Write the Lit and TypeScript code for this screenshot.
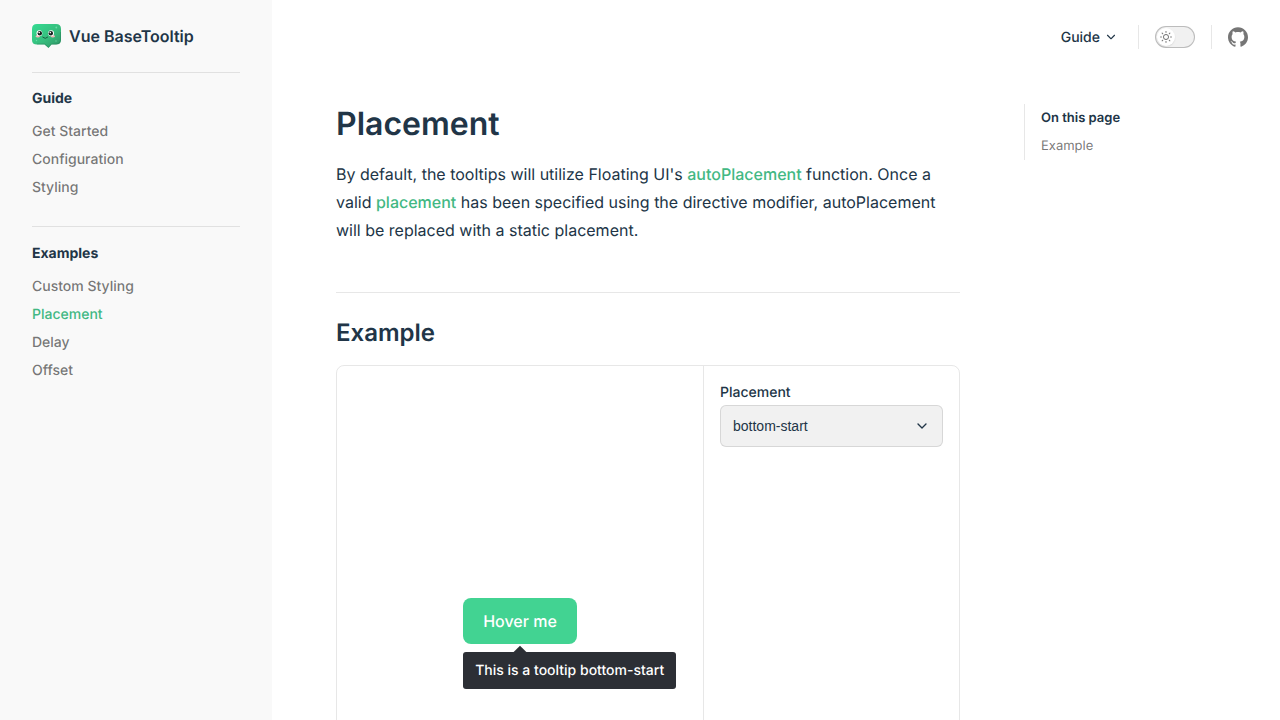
import { LitElement, html, css } from "lit";
import { customElement, state } from "lit/decorators.js";
import { classMap } from "lit/directives/class-map.js";

const placements = [
  "top-start", "top", "top-end",
  "right-start", "right", "right-end",
  "bottom-start", "bottom", "bottom-end",
  "left-start", "left", "left-end",
];

const sections = [
  { title: "Guide", links: ["Get Started", "Configuration", "Styling"] },
  { title: "Examples", links: ["Custom Styling", "Placement", "Delay", "Offset"] },
];

const chevron = html`
  <svg class="chevron" viewBox="0 0 24 24" aria-hidden="true">
    <path fill="currentColor" d="M12,16c-0.3,0-0.5-0.1-0.7-0.3l-6-6c-0.4-0.4-0.4-1,0-1.4s1-0.4,1.4,0l5.3,5.3l5.3-5.3c0.4-0.4,1-0.4,1.4,0s0.4,1,0,1.4l-6,6C12.5,15.9,12.3,16,12,16z"/>
  </svg>`;

@customElement("site-sidebar")
class SiteSidebar extends LitElement {
  static styles = css`
    :host {
      display: block;
      box-sizing: border-box;
      position: sticky;
      top: 0;
      height: 100vh;
      padding: 0 32px;
      background: #f9f9f9;
      overflow: hidden;
    }
    a { text-decoration: none; }
    .brand {
      display: flex;
      align-items: center;
      gap: 8px;
      height: 72px;
      font-size: 16px;
      font-weight: 600;
      color: #213547;
    }
    .logo { width: 29px; height: 24px; }
    .group {
      border-top: 1px solid rgba(60, 60, 60, 0.12);
      padding: 11px 0 24px;
    }
    .group:first-child { padding-top: 10px; }
    .title {
      margin: 0 0 3px;
      padding: 6px 0;
      font-size: 14px;
      line-height: 20px;
      font-weight: 700;
      color: #213547;
    }
    .list {
      list-style: none;
      margin: 0;
      padding: 0;
    }
    .link {
      display: block;
      padding: 4px 0;
      font-size: 14px;
      line-height: 20px;
      font-weight: 500;
      color: rgba(60, 60, 60, 0.7);
    }
    .link.active { color: #42b883; }
  `;

  render() {
    return html`
      <a class="brand" href="#">
        <svg class="logo" viewBox="0 0 29 24" aria-hidden="true">
          <defs>
            <linearGradient id="body" x1="0" y1="0" x2="1" y2="1">
              <stop offset="0" stop-color="#35dc93"/>
              <stop offset="0.55" stop-color="#37bd7d"/>
              <stop offset="1" stop-color="#2f9264"/>
            </linearGradient>
          </defs>
          <path fill="url(#body)" d="M5 0h19q5 0 5 5v11q0 4.500-5 4.500h-4.500L16.500 24 12.500 20.500H5q-5 0-5-4.500V5q0-5 5-5z"/>
          <path fill="none" stroke="#257b54" stroke-opacity=".4" d="M28.500 8v8q-.3 4-4.300 4h-4.700l-3 3.200-4-3.200H5"/>
          <g fill="#8af0c0" opacity=".6"><circle cx="24.300" cy="3.500" r=".9"/><circle cx="4.500" cy="16.500" r=".7"/><circle cx="24" cy="17" r=".7"/></g>
          <ellipse cx="5.800" cy="12.300" rx="2" ry="1.200" fill="#f3b5b8"/>
          <ellipse cx="20.800" cy="12.300" rx="2" ry="1.200" fill="#f3b5b8"/>
          <circle cx="7.400" cy="9.200" r="2.900" fill="#fff"/>
          <circle cx="19.100" cy="9.200" r="2.900" fill="#fff"/>
          <circle cx="7.800" cy="9.200" r="2.200" fill="#16201c"/>
          <circle cx="18.800" cy="9.200" r="2.200" fill="#16201c"/>
          <circle cx="7.200" cy="8.600" r=".8" fill="#fff"/>
          <circle cx="18.300" cy="8.600" r=".8" fill="#fff"/>
          <path d="M10.700 13.200q2.600 2.600 5 0" fill="none" stroke="#16523a" stroke-width=".9" stroke-linecap="round"/>
        </svg>
        <span>Vue BaseTooltip</span>
      </a>
      <nav aria-label="Sidebar">
        ${sections.map((s) => html`
          <section class="group">
            <h2 class="title">${s.title}</h2>
            <ul class="list">
              ${s.links.map((l) => html`
                <li><a href="#" class=${classMap({ link: true, active: l === "Placement" })}>${l}</a></li>`)}
            </ul>
          </section>`)}
      </nav>`;
  }
}

@customElement("site-nav")
class SiteNav extends LitElement {
  static styles = css`
    :host {
      display: flex;
      justify-content: flex-end;
      align-items: center;
      gap: 16px;
      height: 74px;
      padding: 0 32px;
    }
    .menu {
      display: flex;
      align-items: center;
      gap: 4px;
      padding: 0 4px 0 0;
      border: 0;
      background: none;
      font: 500 14px/25px Inter, sans-serif;
      text-rendering: inherit;
      color: #213547;
    }
    .chevron { width: 14px; height: 14px; }
    .rule {
      width: 1px;
      height: 24px;
      background: rgba(60, 60, 60, 0.12);
    }
    .switch {
      box-sizing: border-box;
      width: 40px;
      height: 22px;
      padding: 1px;
      border: 1px solid rgba(60, 60, 60, 0.29);
      border-radius: 11px;
      background: #f1f1f1;
    }
    .knob {
      display: flex;
      align-items: center;
      justify-content: center;
      width: 18px;
      height: 18px;
      border-radius: 50%;
      background: #fff;
      box-shadow: 0 1px 2px rgba(0, 0, 0, 0.04), 0 1px 2px rgba(0, 0, 0, 0.06);
      color: rgba(60, 60, 60, 0.7);
    }
    .sun { width: 12px; height: 12px; }
    .social {
      display: flex;
      color: rgba(60, 60, 60, 0.7);
    }
    .github { width: 20px; height: 20px; }
  `;

  render() {
    return html`
      <button class="menu" type="button" aria-haspopup="true">Guide ${chevron}</button>
      <span class="rule"></span>
      <button class="switch" type="button" role="switch" aria-checked="false" aria-label="Toggle dark mode">
        <span class="knob">
          <svg class="sun" viewBox="0 0 24 24" fill="currentColor" aria-hidden="true">
            <path d="M12,18c-3.300,0-6-2.700-6-6s2.700-6,6-6s6,2.700,6,6S15.300,18,12,18zM12,8c-2.200,0-4,1.800-4,4c0,2.200,1.800,4,4,4c2.200,0,4-1.800,4-4C16,9.800,14.200,8,12,8z"/>
            <path d="M12,4c-0.600,0-1-0.400-1-1V1c0-0.600,0.400-1,1-1s1,0.400,1,1v2C13,3.600,12.600,4,12,4z"/>
            <path d="M12,24c-0.600,0-1-0.400-1-1v-2c0-0.600,0.400-1,1-1s1,0.400,1,1v2C13,23.600,12.600,24,12,24z"/>
            <path d="M5.600,6.600c-0.300,0-0.500-0.100-0.700-0.300L3.500,4.900c-0.400-0.400-0.400-1,0-1.400s1-0.400,1.400,0l1.400,1.400c0.400,0.400,0.400,1,0,1.400C6.200,6.500,5.900,6.600,5.600,6.600z"/>
            <path d="M19.800,20.800c-0.300,0-0.500-0.100-0.700-0.300l-1.400-1.400c-0.400-0.400-0.400-1,0-1.400s1-0.400,1.400,0l1.400,1.400c0.400,0.400,0.400,1,0,1.400C20.300,20.700,20,20.800,19.800,20.800z"/>
            <path d="M3,13H1c-0.600,0-1-0.400-1-1s0.400-1,1-1h2c0.600,0,1,0.400,1,1S3.600,13,3,13z"/>
            <path d="M23,13h-2c-0.600,0-1-0.400-1-1s0.400-1,1-1h2c0.600,0,1,0.400,1,1S23.600,13,23,13z"/>
            <path d="M4.200,20.800c-0.300,0-0.500-0.100-0.700-0.300c-0.400-0.400-0.400-1,0-1.400l1.400-1.400c0.400-0.400,1-0.400,1.400,0s0.400,1,0,1.400l-1.400,1.400C4.700,20.700,4.500,20.800,4.200,20.800z"/>
            <path d="M18.400,6.600c-0.300,0-0.500-0.100-0.700-0.300c-0.400-0.400-0.400-1,0-1.400l1.400-1.400c0.400-0.400,1-0.400,1.400,0s0.400,1,0,1.400l-1.400,1.400C18.900,6.500,18.600,6.600,18.400,6.600z"/>
          </svg>
        </span>
      </button>
      <span class="rule"></span>
      <a class="social" href="#" aria-label="GitHub">
        <svg class="github" viewBox="0 0 24 24" aria-hidden="true">
          <path fill="currentColor" d="M12 .297c-6.630 0-12 5.373-12 12 0 5.303 3.438 9.800 8.205 11.385.6.113.82-.258.82-.577 0-.285-.010-1.040-.015-2.040-3.338.724-4.042-1.610-4.042-1.610C4.422 18.070 3.633 17.700 3.633 17.700c-1.087-.744.084-.729.084-.729 1.205.084 1.838 1.236 1.838 1.236 1.070 1.835 2.809 1.305 3.495.998.108-.776.417-1.305.76-1.605-2.665-.3-5.466-1.332-5.466-5.930 0-1.310.465-2.380 1.235-3.220-.135-.303-.54-1.523.105-3.176 0 0 1.005-.322 3.300 1.230.96-.267 1.980-.399 3-.405 1.020.006 2.040.138 3 .405 2.280-1.552 3.285-1.230 3.285-1.230.645 1.653.24 2.873.12 3.176.765.84 1.230 1.910 1.230 3.220 0 4.610-2.805 5.625-5.475 5.920.42.36.81 1.096.81 2.220 0 1.606-.015 2.896-.015 3.286 0 .315.210.69.825.57C20.565 22.092 24 17.592 24 12.297c0-6.627-5.373-12-12-12"/>
        </svg>
      </a>`;
  }
}

@customElement("placement-demo")
class PlacementDemo extends LitElement {
  @state() placement = "bottom-start";

  static styles = css`
    :host {
      display: grid;
      grid-template-columns: minmax(0, 1fr) 256px;
      min-height: 510px;
      border: 1px solid rgba(60, 60, 60, 0.12);
      border-radius: 8px;
    }
    .stage {
      display: flex;
      align-items: center;
      justify-content: center;
    }
    .anchor { position: relative; }
    .button {
      display: block;
      padding: 11px 20px;
      border: 0;
      border-radius: 8px;
      background: #42d392;
      color: #fff;
      font: 500 16px/24px Inter, sans-serif;
      text-rendering: inherit;
    }
    .tip {
      position: absolute;
      padding: 8px 12px 7px;
      border-radius: 3px;
      background: #2c2f35;
      color: #fff;
      font-size: 14px;
      line-height: 22px;
      font-weight: 500;
      white-space: nowrap;
    }
    .arrow {
      position: absolute;
      width: 9px;
      height: 9px;
      background: #2c2f35;
      transform: translate(-50%, -50%) rotate(45deg);
    }
    .bottom .tip { top: calc(100% + 8px); }
    .bottom .arrow { top: calc(100% + 8px); left: 50%; }
    .top .tip { bottom: calc(100% + 8px); }
    .top .arrow { top: -8px; left: 50%; }
    .left .tip { right: calc(100% + 8px); }
    .left .arrow { left: -8px; top: 50%; }
    .right .tip { left: calc(100% + 8px); }
    .right .arrow { left: calc(100% + 8px); top: 50%; }
    .vertical.start .tip { left: 0; }
    .vertical.end .tip { right: 0; }
    .vertical.middle .tip { left: 50%; transform: translateX(-50%); }
    .horizontal.start .tip { top: 0; }
    .horizontal.end .tip { bottom: 0; }
    .horizontal.middle .tip { top: 50%; transform: translateY(-50%); }
    .options {
      padding: 16px;
      border-left: 1px solid rgba(60, 60, 60, 0.12);
    }
    .label {
      display: block;
      margin-bottom: 1px;
      font-size: 14px;
      line-height: 22px;
      font-weight: 500;
      color: #213547;
    }
    .field { display: grid; align-items: center; }
    .select, .field .chevron { grid-area: 1 / 1; }
    .select {
      appearance: none;
      box-sizing: border-box;
      width: 100%;
      height: 42px;
      padding: 0 36px 0 12px;
      border: 1px solid rgba(60, 60, 60, 0.14);
      border-radius: 6px;
      background: #f1f1f1;
      color: #213547;
      font: 14px "Liberation Sans", Arial, sans-serif;
    }
    .chevron {
      width: 16px;
      height: 16px;
      justify-self: end;
      margin-right: 13px;
      color: #213547;
      pointer-events: none;
    }
  `;

  render() {
    const [side, align = "middle"] = this.placement.split("-");
    const vertical = side === "top" || side === "bottom";
    return html`
      <div class="stage">
        <div class=${classMap({ anchor: true, [side]: true, [align]: true, vertical, horizontal: !vertical })}>
          <button class="button" type="button" aria-describedby="tip">Hover me</button>
          <span class="arrow"></span>
          <div class="tip" id="tip" role="tooltip">This is a tooltip ${this.placement}</div>
        </div>
      </div>
      <div class="options">
        <label class="label" for="placement">Placement</label>
        <div class="field">
          <select class="select" id="placement"
            @change=${(e: Event) => (this.placement = (e.target as HTMLSelectElement).value)}>
            ${placements.map((p) => html`<option value=${p} ?selected=${p === this.placement}>${p}</option>`)}
          </select>
          ${chevron}
        </div>
      </div>`;
  }
}

@customElement("app-root")
class AppRoot extends LitElement {
  static styles = css`
    :host {
      display: grid;
      grid-template-columns: 272px minmax(0, 1fr);
      min-height: 100vh;
      background: #fff;
      color: #213547;
      font-family: Inter, sans-serif;
      font-size: 16px;
      line-height: 24px;
      text-rendering: geometricPrecision;
    }
    a { text-decoration: none; }
    .doc {
      display: grid;
      grid-template-columns: minmax(0, 1fr) 224px;
      gap: 64px;
      align-items: start;
      padding: 30px 32px 96px 64px;
    }
    .heading {
      margin: 0;
      font-size: 32px;
      line-height: 40px;
      font-weight: 600;
    }
    .text {
      margin: 16px 0 48px;
      line-height: 28px;
    }
    .text a { font-weight: 500; color: #42b883; }
    .subheading {
      margin: 0 0 16px;
      padding-top: 24px;
      border-top: 1px solid rgba(60, 60, 60, 0.12);
      font-size: 24px;
      line-height: 32px;
      font-weight: 600;
    }
    .outline {
      padding-left: 16px;
      border-left: 1px solid rgba(60, 60, 60, 0.12);
      font-size: 13px;
      line-height: 28px;
    }
    .outline-title { font-weight: 600; }
    .outline-link { display: block; color: rgba(60, 60, 60, 0.7); }
  `;

  render() {
    return html`
      <site-sidebar></site-sidebar>
      <div>
        <site-nav></site-nav>
        <div class="doc">
          <main>
            <h1 class="heading">Placement</h1>
            <p class="text">By default, the tooltips will utilize Floating UI's <a href="#">autoPlacement</a> function. Once a valid <a href="#">placement</a> has been specified using the directive modifier, autoPlacement will be replaced with a static placement.</p>
            <h2 class="subheading">Example</h2>
            <placement-demo></placement-demo>
          </main>
          <aside class="outline">
            <div class="outline-title">On this page</div>
            <a class="outline-link" href="#">Example</a>
          </aside>
        </div>
      </div>`;
  }
}
